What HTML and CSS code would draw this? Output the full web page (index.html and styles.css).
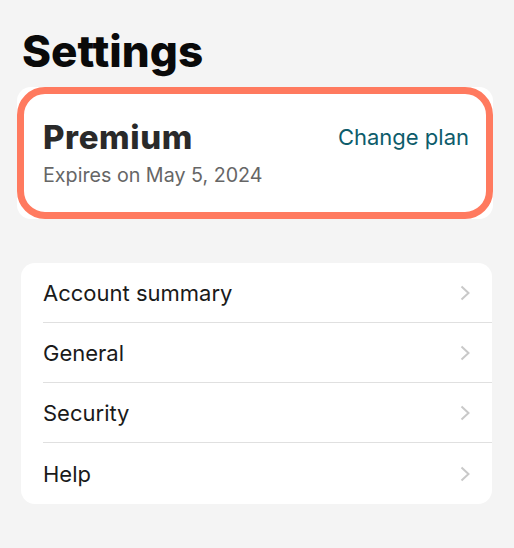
FILE: index.html
```html
<!DOCTYPE html>
<html>
<head>
<meta charset="utf-8">
<link rel="stylesheet" href="styles.css">
</head>
<body>
<main class="page">
  <h1 class="title">Settings</h1>
  <section class="plan-wrap">
    <div class="plan">
      <div class="plan-info">
        <div class="plan-name">Premium</div>
        <div class="plan-exp">Expires on May 5, 2024</div>
      </div>
      <a class="plan-link">Change plan</a>
    </div>
  </section>
  <ul class="list">
    <li class="row"><span>Account summary</span><svg class="chev" viewBox="0 0 10 16"><path d="M1.5 1.5 L8.5 8 L1.5 14.5"/></svg></li>
    <li class="row"><span>General</span><svg class="chev" viewBox="0 0 10 16"><path d="M1.5 1.5 L8.5 8 L1.5 14.5"/></svg></li>
    <li class="row"><span>Security</span><svg class="chev" viewBox="0 0 10 16"><path d="M1.5 1.5 L8.5 8 L1.5 14.5"/></svg></li>
    <li class="row"><span>Help</span><svg class="chev" viewBox="0 0 10 16"><path d="M1.5 1.5 L8.5 8 L1.5 14.5"/></svg></li>
  </ul>
</main>
</body>
</html>
```
FILE: styles.css
```css
html, body {
  margin: 0;
  padding: 0;
  background: #f4f4f4;
  font-family: "Inter", "Noto Sans", sans-serif;
}
.page {
  padding: 24px 21px 0 17px;
  display: flex;
  flex-direction: column;
}
.title {
  margin: 0 0 0 5px;
  font-size: 44px;
  font-weight: 800;
  color: #0a0a0a;
  line-height: 54px;
}
.plan-wrap {
  margin-top: 9px;
  width: 476px;
  background: #fff;
  border-radius: 14px;
}
.plan {
  border: 7px solid #ff7a5f;
  border-radius: 28px;
  box-sizing: border-box;
  height: 132px;
  padding: 0 17px 0 19px;
  display: flex;
  justify-content: space-between;
  align-items: flex-start;
}
.plan-info {
  display: flex;
  flex-direction: column;
}
.plan-name {
  margin-top: 23px;
  font-size: 33px;
  font-weight: 800;
  letter-spacing: 0.6px;
  color: #2a2a2a;
  line-height: 40px;
}
.plan-exp {
  margin-top: 6px;
  font-size: 19.7px;
  color: #666;
  line-height: 24px;
}
.plan-link {
  margin-top: 29px;
  font-size: 22px;
  color: #0d5c6b;
  line-height: 28px;
}
.list {
  list-style: none;
  margin: 44px 0 0 4px;
  padding: 0 0 0 22px;
  width: 449px;
  background: #fff;
  border-radius: 14px;
}
.row {
  height: 60px;
  display: flex;
  align-items: center;
  justify-content: space-between;
  padding-right: 22px;
  font-size: 22px;
  color: #1a1a1a;
  border-bottom: 1.5px solid #e0e0e0;
  box-sizing: border-box;
}
.row:last-child {
  border-bottom: none;
  height: 61px;
}
.chev {
  width: 10px;
  height: 16px;
  fill: none;
  stroke: #c9c9c9;
  stroke-width: 2;
}
```
